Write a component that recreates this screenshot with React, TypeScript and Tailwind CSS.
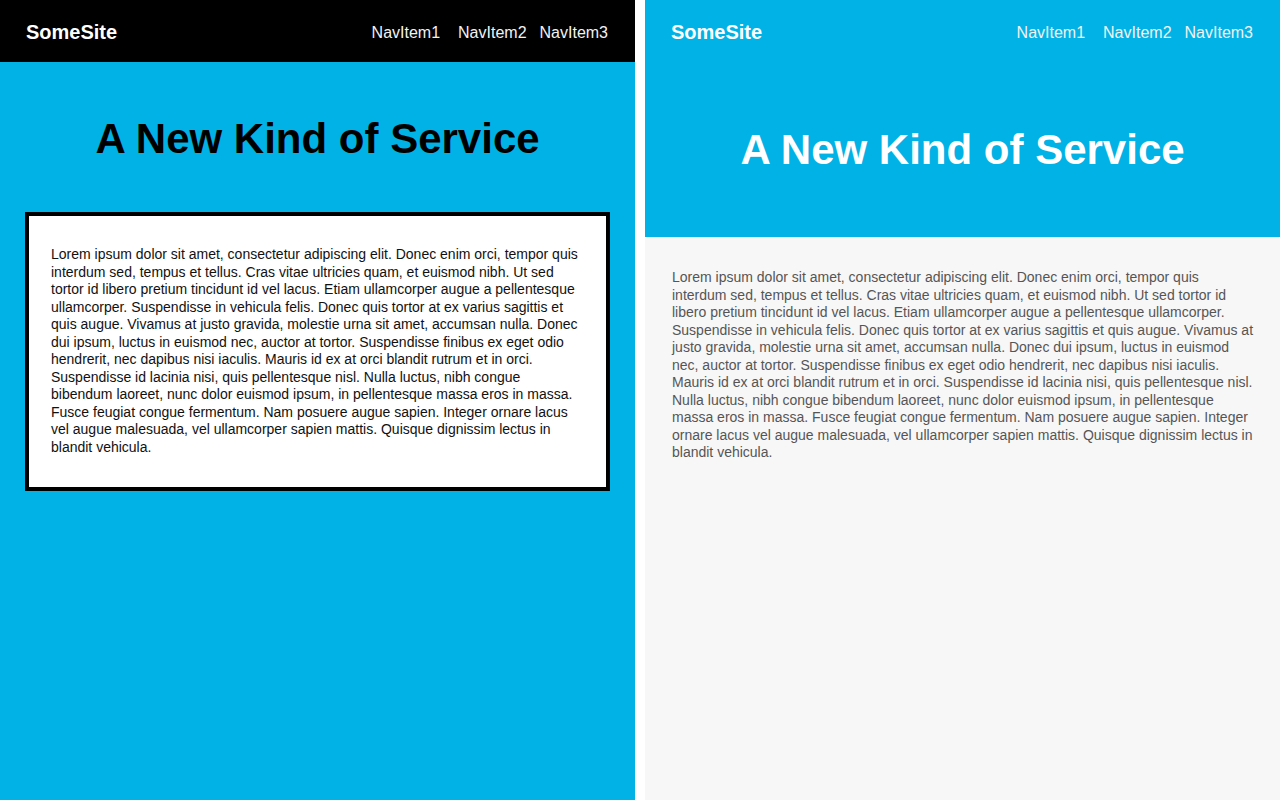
const lorem =
    'Lorem ipsum dolor sit amet, consectetur adipiscing elit. Donec enim orci, tempor quis interdum sed, tempus et tellus. Cras vitae ultricies quam, et euismod nibh. Ut sed tortor id libero pretium tincidunt id vel lacus. Etiam ullamcorper augue a pellentesque ullamcorper. Suspendisse in vehicula felis. Donec quis tortor at ex varius sagittis et quis augue. Vivamus at justo gravida, molestie urna sit amet, accumsan nulla. Donec dui ipsum, luctus in euismod nec, auctor at tortor. Suspendisse finibus ex eget odio hendrerit, nec dapibus nisi iaculis. Mauris id ex at orci blandit rutrum et in orci. Suspendisse id lacinia nisi, quis pellentesque nisl. Nulla luctus, nibh congue bibendum laoreet, nunc dolor euismod ipsum, in pellentesque massa eros in massa. Fusce feugiat congue fermentum. Nam posuere augue sapien. Integer ornare lacus vel augue malesuada, vel ullamcorper sapien mattis. Quisque dignissim lectus in blandit vehicula.';

function Header({ className }: { className: string }) {
    return (
        <header className={`flex h-[62px] items-center justify-between pr-[27px] pl-[26px] ${className}`}>
            <span className="mt-[2px] text-[20px] font-bold text-white">SomeSite</span>
            <nav className="mt-[4px] flex text-[16px] text-[#f2f2f2]">
                <a>NavItem1</a>
                <a className="ml-[18px]">NavItem2</a>
                <a className="ml-[13px]">NavItem3</a>
            </nav>
        </header>
    );
}

export default function App() {
    return (
        <div className="flex h-[800px] w-[1280px] gap-[10px] bg-white font-['Liberation_Sans',Arial,sans-serif]">
            {/* variante 1: cabeçalho preto, caixa com borda */}
            <div className="flex w-[635px] flex-col bg-[#00b2e5]">
                <Header className="bg-black" />
                <h1 className="mt-[56px] text-center text-[42px] leading-[42px] font-bold text-black">A New Kind of Service</h1>
                <div className="mx-[25px] mt-[52px] border-4 border-black bg-white px-[22px] pt-[30px] pb-[31px]">
                    <p className="text-[14px] leading-[17.5px] text-[#111]">{lorem}</p>
                </div>
            </div>

            {/* variante 2: hero azul, conteúdo cinza */}
            <div className="flex w-[635px] flex-col bg-[#f7f7f7]">
                <div className="bg-[#00b2e5]">
                    <Header className="" />
                    <div className="flex h-[175px] items-center justify-center">
                        <h1 className="text-[42px] leading-[42px] font-bold text-white">A New Kind of Service</h1>
                    </div>
                </div>
                <p className="pt-[32px] pr-[24px] pl-[27px] text-[14px] leading-[17.5px] text-[#555]">{lorem}</p>
            </div>
        </div>
    );
}
